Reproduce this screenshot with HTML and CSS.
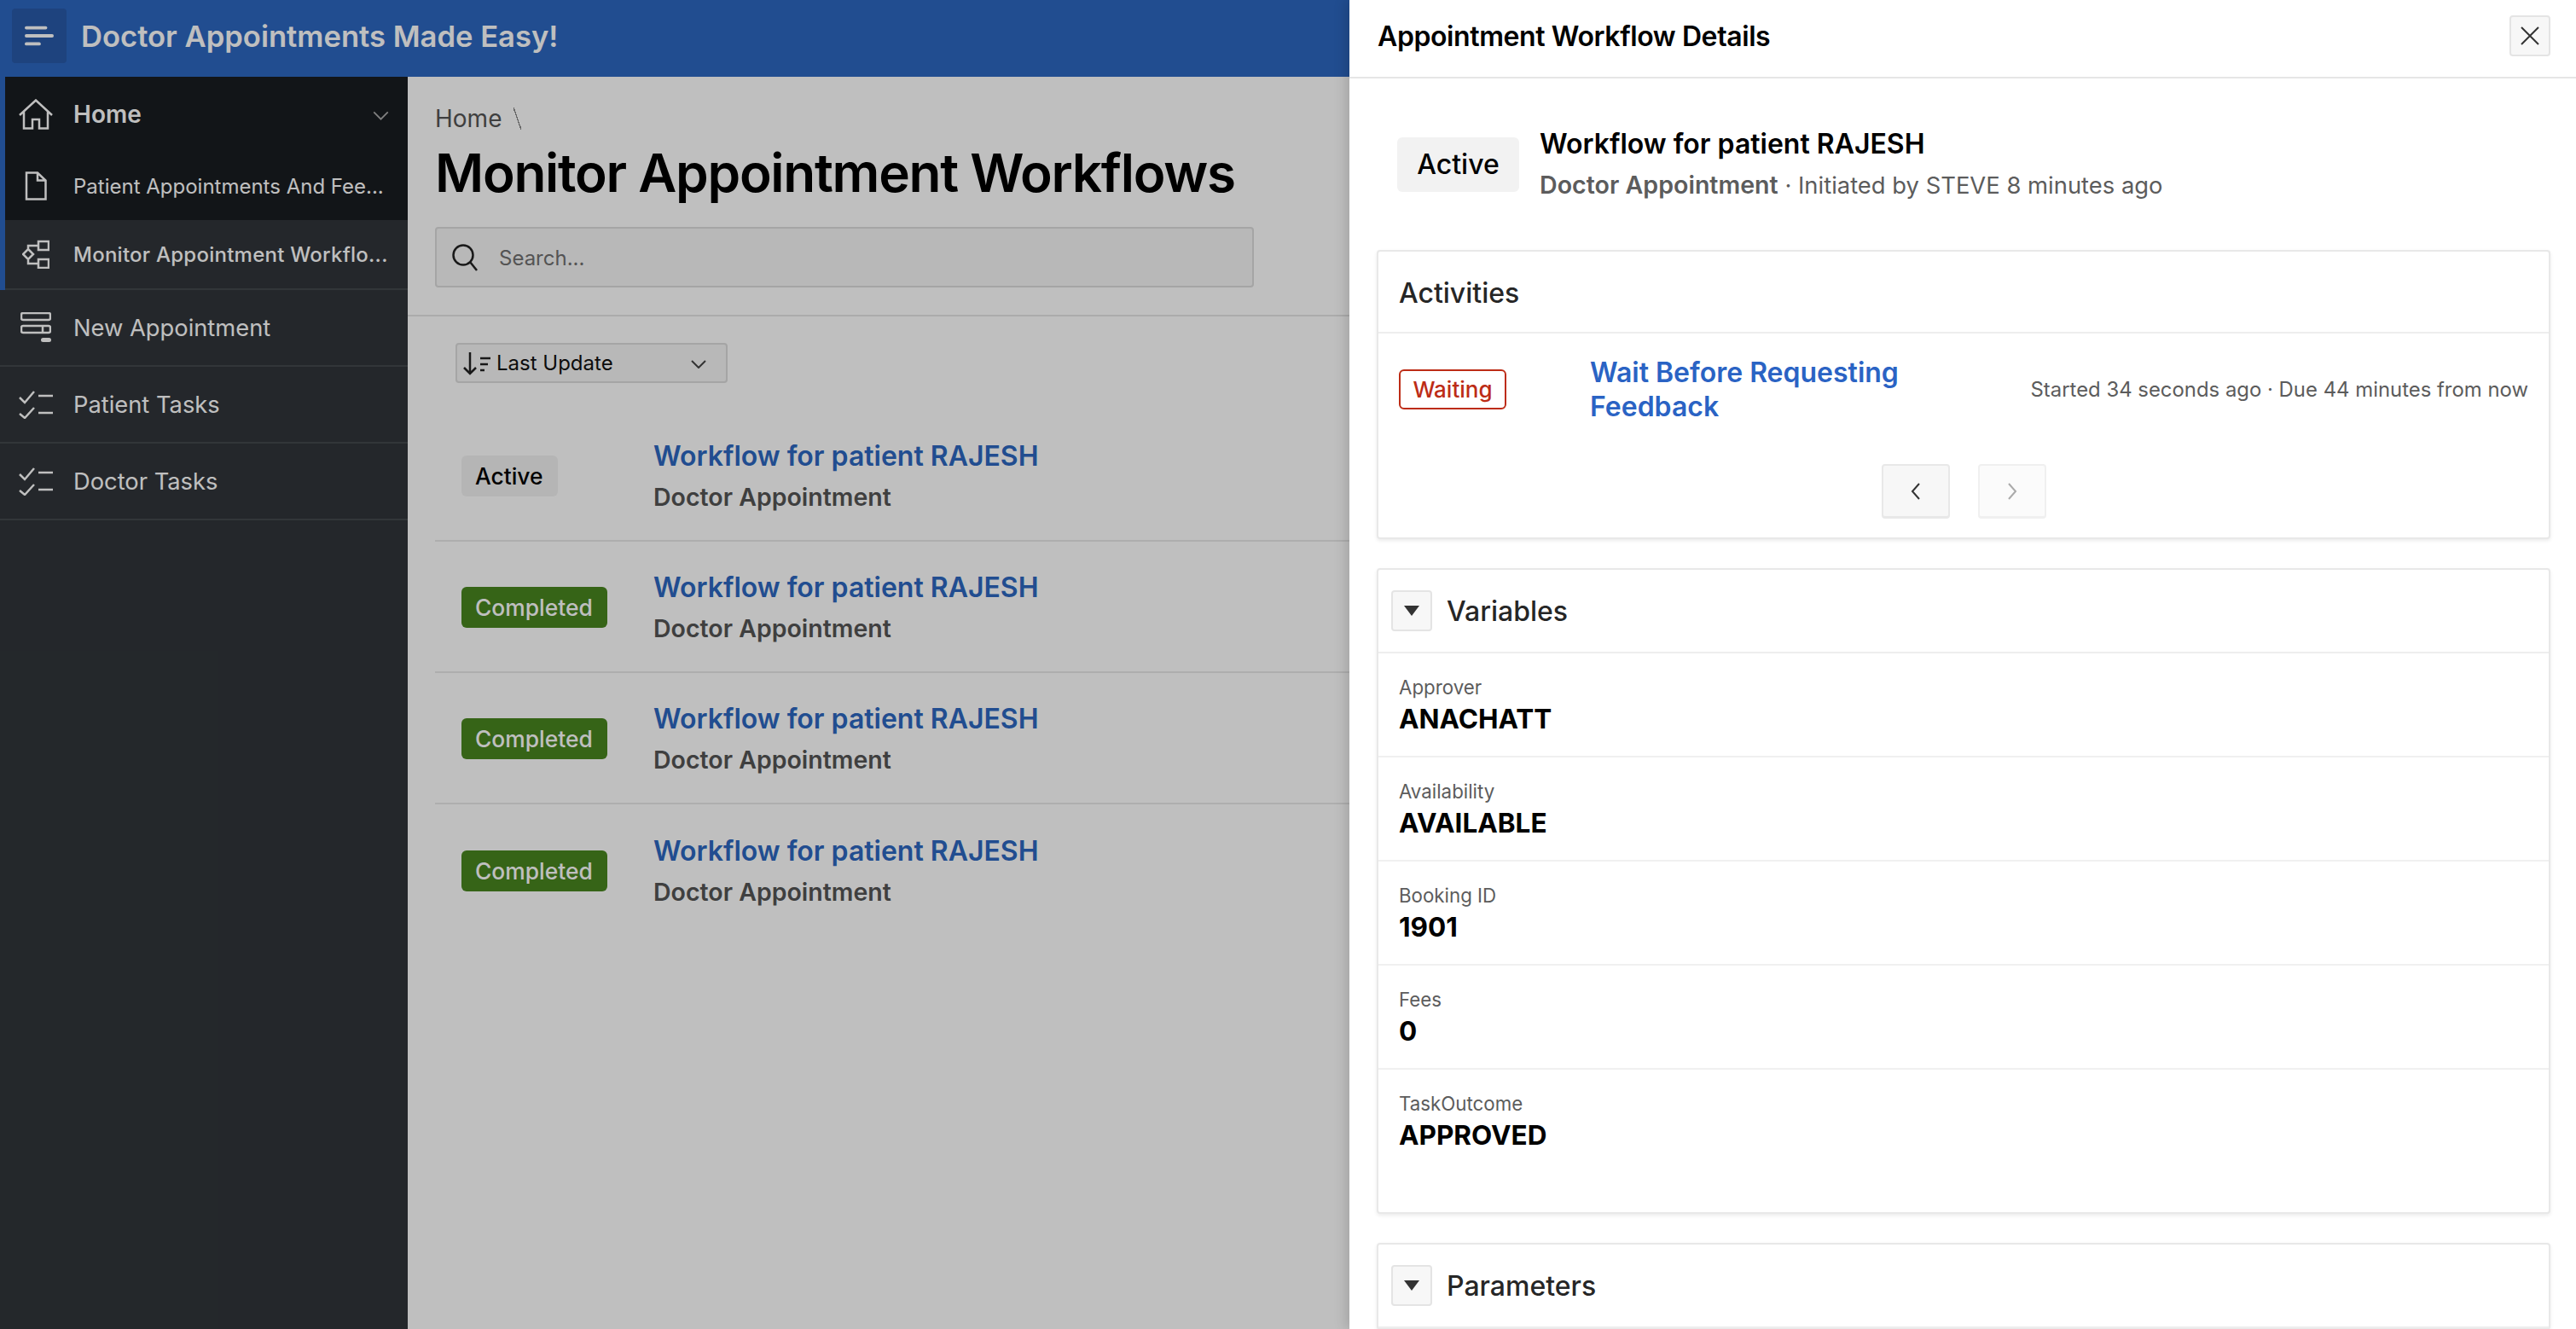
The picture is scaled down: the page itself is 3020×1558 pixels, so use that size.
FILE: index.html
```html
<!DOCTYPE html>
<html lang="en">
<head>
<meta charset="utf-8">
<title>Monitor Appointment Workflows</title>
<link rel="stylesheet" href="styles.css">
</head>
<body>
<div class="app">
  <header class="topbar">
    <button class="menu-btn" aria-label="Menu">
      <svg class="ico-menu" viewBox="0 0 36 26"><path d="M2 3H26M2 13H34M2 23H18"/></svg>
    </button>
    <span class="brand">Doctor Appointments Made Easy!</span>
  </header>
  <div class="shell">
    <nav class="sidebar">
      <div class="nav-group">
        <a class="nav-item nav-home">
          <span class="nav-ico"><svg class="ico ico-home" viewBox="0 0 40 36"><path d="M1 19 20 1.500 39 19M6 15V34.500H16V24H24V34.500H34V15"/></svg></span>
          <span class="nav-label">Home</span>
          <svg class="nav-caret" viewBox="0 0 20 12"><path d="M1 1.500 10 10.500 19 1.500"/></svg>
        </a>
        <a class="nav-item nav-sub">
          <span class="nav-ico"><svg class="ico ico-file" viewBox="0 0 26 34"><path d="M2 1.500H15L24.500 10.500V32.500H2ZM15 1.500V10.500H24.500"/></svg></span>
          <span class="nav-label">Patient Appointments And Fee...</span>
        </a>
        <a class="nav-item nav-sub nav-current">
          <span class="nav-ico"><svg class="ico ico-flow" viewBox="0 0 32 34"><path d="M19 2H31V12H19ZM19 23H31V33H19ZM7 11 13 17 7 23 1 17ZM19 7H7V11M7 23V28H19"/></svg></span>
          <span class="nav-label">Monitor Appointment Workflo...</span>
        </a>
      </div>
      <a class="nav-item">
        <span class="nav-ico"><svg class="ico ico-form" viewBox="0 0 36 36"><rect x="1" y="1" width="34" height="8" rx="2"/><rect x="1" y="16" width="34" height="8" rx="2"/><path d="M26 16V24"/><rect class="fill" x="24" y="30" width="12" height="5" rx="2.500"/></svg></span>
        <span class="nav-label">New Appointment</span>
      </a>
      <a class="nav-item">
        <span class="nav-ico"><svg class="ico ico-check" viewBox="0 0 40 34"><path d="M1 9 7 15 18 2M1 28 7 33 18 21M23 7H40M23 27H40"/></svg></span>
        <span class="nav-label">Patient Tasks</span>
      </a>
      <a class="nav-item">
        <span class="nav-ico"><svg class="ico ico-check" viewBox="0 0 40 34"><path d="M1 9 7 15 18 2M1 28 7 33 18 21M23 7H40M23 27H40"/></svg></span>
        <span class="nav-label">Doctor Tasks</span>
      </a>
    </nav>
    <main class="main">
      <section class="page-head">
        <div class="crumbs"><span>Home</span><span class="crumb-sep"></span></div>
        <h1 class="page-title">Monitor Appointment Workflows</h1>
        <div class="search">
          <svg class="ico-search" viewBox="0 0 30 32"><circle cx="13" cy="13" r="11.500"/><path d="M21 21 29 31"/></svg>
          <span class="search-ph">Search...</span>
        </div>
      </section>
      <section class="results">
        <div class="sort">
          <svg class="ico-sort" viewBox="0 0 34 28"><path d="M9 1V26M2 19 9 26 16 19M21 8H33M21 15H30M21 22H26"/></svg>
          <span class="sort-label">Last Update</span>
          <svg class="sort-caret" viewBox="0 0 18 10"><path d="M1 1 9 9 17 1"/></svg>
        </div>
        <ul class="wf-list">
          <li class="wf-row">
            <div class="wf-badge"><span class="pill pill-active">Active</span></div>
            <div class="wf-text"><a class="wf-title">Workflow for patient RAJESH</a><div class="wf-sub">Doctor Appointment</div></div>
          </li>
          <li class="wf-row">
            <div class="wf-badge"><span class="pill pill-done">Completed</span></div>
            <div class="wf-text"><a class="wf-title">Workflow for patient RAJESH</a><div class="wf-sub">Doctor Appointment</div></div>
          </li>
          <li class="wf-row">
            <div class="wf-badge"><span class="pill pill-done">Completed</span></div>
            <div class="wf-text"><a class="wf-title">Workflow for patient RAJESH</a><div class="wf-sub">Doctor Appointment</div></div>
          </li>
          <li class="wf-row">
            <div class="wf-badge"><span class="pill pill-done">Completed</span></div>
            <div class="wf-text"><a class="wf-title">Workflow for patient RAJESH</a><div class="wf-sub">Doctor Appointment</div></div>
          </li>
        </ul>
      </section>
    </main>
  </div>
</div>
<div class="scrim"></div>
<aside class="drawer">
  <div class="drawer-head">
    <h2 class="drawer-title">Appointment Workflow Details</h2>
    <button class="close-btn" aria-label="Close">
      <svg class="ico-close" viewBox="0 0 22 22"><path d="M1 1 21 21M21 1 1 21"/></svg>
    </button>
  </div>
  <div class="drawer-body">
    <div class="hero">
      <span class="hero-badge">Active</span>
      <div>
        <div class="hero-title">Workflow for patient RAJESH</div>
        <div class="hero-sub"><strong>Doctor Appointment</strong> · Initiated by STEVE 8 minutes ago</div>
      </div>
    </div>
    <section class="card">
      <div class="card-head card-head-plain"><h3 class="card-title">Activities</h3></div>
      <div class="activity">
        <span class="pill-wait">Waiting</span>
        <a class="activity-link">Wait Before Requesting Feedback</a>
        <span class="activity-meta">Started 34 seconds ago · Due 44 minutes from now</span>
      </div>
      <div class="pager">
        <button class="page-btn" aria-label="Previous"><svg class="ico-page" viewBox="0 0 12 20"><path d="M10 1 2 10 10 19"/></svg></button>
        <button class="page-btn page-btn-off" aria-label="Next"><svg class="ico-page" viewBox="0 0 12 20"><path d="M2 1 10 10 2 19"/></svg></button>
      </div>
    </section>
    <section class="card">
      <div class="card-head">
        <button class="toggle" aria-label="Collapse"><svg class="ico-tri" viewBox="0 0 18 12"><path d="M0 0H18L9 12Z"/></svg></button>
        <h3 class="card-title">Variables</h3>
      </div>
      <div class="var-row"><div class="var-label">Approver</div><div class="var-value">ANACHATT</div></div>
      <div class="var-row"><div class="var-label">Availability</div><div class="var-value">AVAILABLE</div></div>
      <div class="var-row"><div class="var-label">Booking ID</div><div class="var-value">1901</div></div>
      <div class="var-row"><div class="var-label">Fees</div><div class="var-value">0</div></div>
      <div class="var-row var-row-last"><div class="var-label">TaskOutcome</div><div class="var-value">APPROVED</div></div>
    </section>
    <section class="card">
      <div class="card-head">
        <button class="toggle" aria-label="Collapse"><svg class="ico-tri" viewBox="0 0 18 12"><path d="M0 0H18L9 12Z"/></svg></button>
        <h3 class="card-title">Parameters</h3>
      </div>
    </section>
  </div>
</aside>
</body>
</html>
```

FILE: styles.css
```css
* { box-sizing: border-box; }
html, body { margin: 0; height: 100%; overflow: hidden; }
body { font-family: Inter, "Liberation Sans", sans-serif; background: #fff; color: #000; }
h1, h2, h3, ul { margin: 0; padding: 0; }
ul { list-style: none; }
button { padding: 0; font: inherit; cursor: pointer; }
svg { display: block; fill: none; }

.app { height: 1558px; display: flex; flex-direction: column; }

.topbar { flex: 0 0 90px; background: #2d67c0; display: flex; align-items: center; padding-left: 14px; }
.menu-btn { width: 64px; height: 64px; margin-bottom: 6px; background: #285aa8; border: 0; border-radius: 4px; display: flex; align-items: center; justify-content: center; }
.ico-menu { width: 34px; height: 26px; stroke: #fff; stroke-width: 4; stroke-linecap: round; }
.brand { margin: 0 0 6px 17px; font-size: 34.6px; font-weight: 600; color: #fff; }

.shell { flex: 1; display: flex; min-height: 0; }
.sidebar { flex: 0 0 478px; background: #30353a; color: #fff; }
.nav-group { border-left: 6px solid #2d67c0; background: #30353a; }
.nav-item { display: flex; align-items: center; height: 90px; padding-left: 86px; position: relative; border-bottom: 2px solid #43484d; font-size: 27.3px; }
.nav-group .nav-item { padding-left: 80px; }
.nav-home { height: 88px; background: #191c20; border-bottom: 0; font-size: 28px; font-weight: 600; }
.nav-sub { height: 80px; background: #191c20; border-bottom: 0; font-size: 24px; }
.nav-current { height: 82px; background: #30353a; border-bottom: 2px solid #43484d; font-weight: 500; letter-spacing: .25px; }
.nav-label { white-space: nowrap; }
.nav-ico { position: absolute; left: 0; top: 0; bottom: 0; width: 84px; display: flex; align-items: center; justify-content: center; }
.nav-group .nav-ico { width: 72px; }
.ico { stroke: #fff; stroke-width: 2.500; }
.ico-home { width: 40px; height: 36px; }
.ico-file { width: 26px; height: 34px; }
.ico-flow { width: 32px; height: 34px; }
.ico-form { width: 36px; height: 36px; }
.ico-form .fill { fill: #fff; stroke: none; }
.ico-check { width: 40px; height: 34px; }
.nav-caret { position: absolute; left: 431px; top: 40px; width: 19px; height: 11px; stroke: #aaa; stroke-width: 2; }

.main { flex: 1; background: #fff; min-width: 0; }
.page-head { height: 281px; padding: 30px 0 0 32px; border-bottom: 2px solid #e4e4e4; }
.crumbs { display: flex; align-items: center; height: 38px; font-size: 28px; color: #555; }
.crumb-sep { width: 9px; height: 26px; margin-left: 14px; background: linear-gradient(to top right, transparent 46%, #888 46%, #888 54%, transparent 54%); }
.page-title { margin-top: 7px; height: 75px; font-size: 62px; line-height: 75px; font-weight: 600; letter-spacing: -1.27px; }
.search { margin-top: 26px; width: 960px; height: 71px; border: 2px solid #dcdcdc; border-radius: 4px; background: #f6f6f6; display: flex; align-items: center; padding-left: 18px; }
.ico-search { width: 30px; height: 32px; stroke: #222; stroke-width: 2.500; }
.search-ph { margin: 2px 0 0 25px; font-size: 24px; color: #707070; }

.results { padding: 31px 0 0 32px; }
.sort { margin-left: 24px; width: 319px; height: 47px; border: 2px solid #dcdcdc; border-radius: 4px; background: #f6f6f6; display: flex; align-items: center; padding-left: 6px; position: relative; }
.ico-sort { width: 34px; height: 28px; stroke: #222; stroke-width: 2.500; }
.sort-label { margin-left: 6px; font-size: 24px; color: #111; }
.sort-caret { position: absolute; left: 274px; top: 18px; width: 18px; height: 10px; stroke: #444; stroke-width: 2; }
.wf-list { margin-top: 32px; }
.wf-row { height: 154px; display: flex; align-items: center; padding-left: 31px; border-bottom: 2px solid #e8e8e8; }
.wf-row:last-child { border-bottom: 0; }
.wf-badge { flex: 0 0 225px; padding-top: 2px; }
.wf-text { padding-top: 4px; }
.pill { display: block; width: max-content; height: 48px; line-height: 48px; padding: 0 17px 0 16px; border-radius: 6px; font-size: 26.4px; font-weight: 500; }
.pill-active { background: #f2f2f2; color: #000; }
.pill-done { background: #48861f; color: #fff; }
.wf-title { display: block; font-size: 32px; line-height: 44px; font-weight: 600; color: #2d67c0; }
.wf-sub { margin-top: 4px; font-size: 28.5px; line-height: 44px; font-weight: 600; color: #555; }

.scrim { position: absolute; inset: 0; background: rgba(0, 0, 0, .25); }

.drawer { position: absolute; top: 0; right: 0; bottom: 0; width: 1438px; background: #fff; box-shadow: -4px 0 14px rgba(0, 0, 0, .15); overflow: hidden; }
.drawer-head { height: 92px; border-bottom: 2px solid #e6e6e6; display: flex; align-items: center; justify-content: space-between; padding: 0 30px 6px 33px; }
.drawer-title { font-size: 32px; font-weight: 600; letter-spacing: -.4px; }
.close-btn { width: 48px; height: 48px; border: 2px solid #e4e4e4; border-radius: 4px; background: #f7f7f7; display: flex; align-items: center; justify-content: center; }
.ico-close { width: 22px; height: 22px; stroke: #333; stroke-width: 2; }
.drawer-body { padding: 0 30px 0 32px; }
.hero { height: 201px; display: flex; align-items: center; padding-left: 24px; }
.hero-badge { width: 143px; height: 64px; line-height: 64px; text-align: center; margin-right: 24px; border-radius: 6px; background: #f2f2f2; font-size: 32px; font-weight: 500; }
.hero-title { font-size: 32px; line-height: 44px; font-weight: 600; }
.hero-sub { margin-top: 4px; font-size: 27.4px; line-height: 44px; color: #5c5c5c; }
.hero-sub strong { font-size: 28.6px; font-weight: 600; }

.card { border: 2px solid #e8e8e8; border-radius: 4px; box-shadow: 0 2px 4px rgba(0, 0, 0, .08); margin-bottom: 34px; background: #fff; }
.card-head { height: 98px; display: flex; align-items: center; border-bottom: 2px solid #eee; padding-left: 15px; }
.card-head-plain { height: 96px; padding: 2px 0 0 24px; }
.card-title { font-size: 32px; font-weight: 500; color: #262626; }
.toggle { width: 48px; height: 48px; margin-right: 17px; border: 2px solid #e4e4e4; border-radius: 4px; background: #f7f7f7; display: flex; align-items: center; justify-content: center; }
.ico-tri { width: 18px; height: 12px; }
.ico-tri path { fill: #333; }

.activity { height: 130px; display: flex; align-items: center; padding: 0 24px; }
.pill-wait { flex: 0 0 126px; height: 47px; line-height: 43px; text-align: center; border: 2px solid #bd2c16; border-radius: 6px; color: #bd2c16; font-size: 26px; font-weight: 500; }
.activity-link { margin-left: 98px; width: 400px; padding-top: 2px; font-size: 32px; line-height: 40px; font-weight: 600; color: #2a63c4; }
.activity-meta { margin-left: auto; font-size: 23.9px; color: #5c5c5c; white-space: nowrap; }
.pager { display: flex; justify-content: center; gap: 33px; padding: 23px 0 22px; }
.page-btn { width: 80px; height: 64px; border: 2px solid #e8e8e8; border-bottom-width: 3px; border-radius: 4px; background: #f7f7f7; display: flex; align-items: center; justify-content: center; }
.page-btn-off { background: #fbfbfb; border-color: #f0f0f0; }
.ico-page { width: 12px; height: 20px; stroke: #333; stroke-width: 2; }
.page-btn-off .ico-page { stroke: #aaa; }

.var-row { height: 122px; padding: 27px 0 0 24px; border-bottom: 2px solid #f0f0f0; }
.var-row-last { height: 167px; border-bottom: 0; }
.var-label { font-size: 22.3px; line-height: 26px; color: #5c5c5c; }
.var-value { margin-top: 4px; font-size: 31.5px; line-height: 40px; font-weight: 700; }
```
